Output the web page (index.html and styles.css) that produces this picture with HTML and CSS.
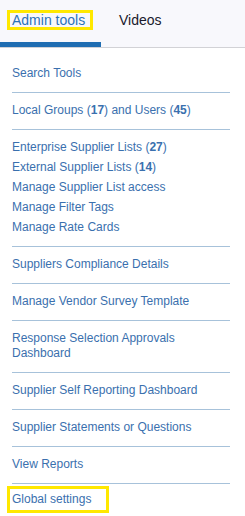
FILE: index.html
```html
<!DOCTYPE html>
<html>
<head>
<meta charset="utf-8">
<link rel="stylesheet" href="styles.css">
</head>
<body>
<div class="tabs">
  <div class="tab active"><span class="tab-label">Admin tools</span></div>
  <div class="tab second"><span class="tab-label">Videos</span></div>
</div>
<div class="content">
  <div class="section first"><a class="link">Search Tools</a></div>
  <div class="section"><a class="link">Local Groups (<b>17</b>) and Users (<b>45</b>)</a></div>
  <div class="section group">
    <a class="link">Enterprise Supplier Lists (<b>27</b>)</a>
    <a class="link">External Supplier Lists (<b>14</b>)</a>
    <a class="link">Manage Supplier List access</a>
    <a class="link">Manage Filter Tags</a>
    <a class="link">Manage Rate Cards</a>
  </div>
  <div class="section"><a class="link">Suppliers Compliance Details</a></div>
  <div class="section"><a class="link">Manage Vendor Survey Template</a></div>
  <div class="section"><a class="link">Response Selection Approvals Dashboard</a></div>
  <div class="section"><a class="link">Supplier Self Reporting Dashboard</a></div>
  <div class="section"><a class="link">Supplier Statements or Questions</a></div>
  <div class="section"><a class="link">View Reports</a></div>
  <div class="section last"><a class="link highlight">Global settings</a></div>
</div>
</body>
</html>
```
FILE: styles.css
```css
html, body {
  margin: 0;
  padding: 0;
  background: #ffffff;
  font-family: "Liberation Sans", Arial, sans-serif;
}
.tabs {
  display: flex;
  height: 48px;
  box-sizing: border-box;
  background: #f8f8fc;
  border-bottom: 1px solid #d2d2d6;
}
.tab {
  box-sizing: border-box;
  padding: 10px 7px 0;
  border-bottom: 5px solid transparent;
  font-size: 14px;
  color: #1a1a2c;
}
.tab.active {
  width: 101px;
  border-bottom-color: #1f6db2;
  color: #2c72b8;
}
.tab.second {
  margin-left: 6px;
}
.tab-label {
  display: inline-block;
  border: 3px solid transparent;
  padding: 0 5px 0 2px;
  line-height: 14px;
}
.tab.active .tab-label {
  border-color: #ffe800;
}
.content {
  padding: 8px 15px 0 12px;
}
.section {
  padding: 10px 0 11px;
  border-top: 1px solid #a7c2da;
}
.section.first {
  border-top: none;
}
.section.group {
  display: flex;
  flex-direction: column;
  gap: 5px;
}
.link {
  display: block;
  font-size: 12px;
  line-height: 15px;
  color: #3a70ae;
  text-decoration: none;
}
.link b {
  font-weight: bold;
}
.section.last {
  padding-top: 2px;
}
.link.highlight {
  display: inline-block;
  margin-left: -5px;
  border: 3px solid #ffe800;
  padding: 3px 15px 3px 2px;
}
```
